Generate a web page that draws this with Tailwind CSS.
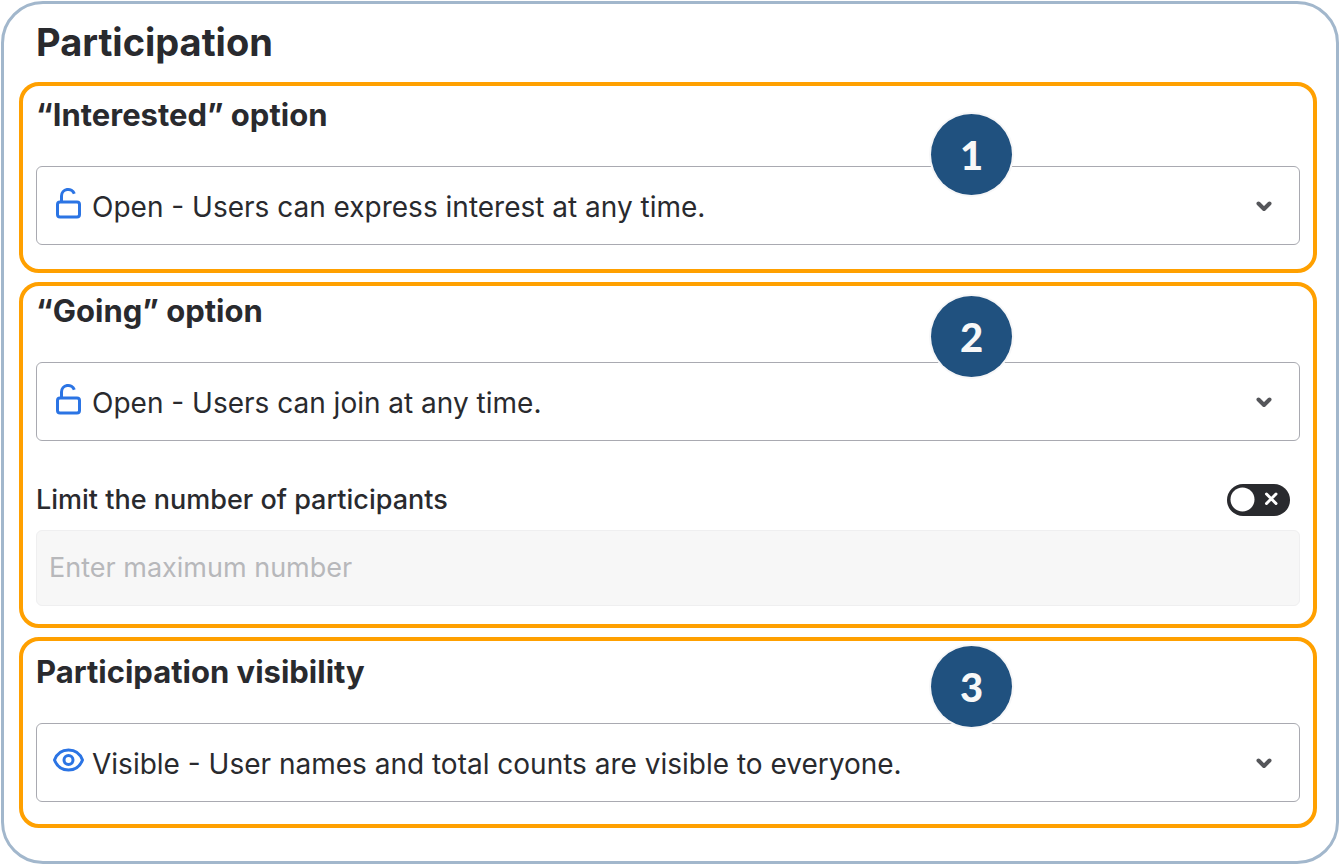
<!DOCTYPE html>
<html lang="en">
<head>
    <meta charset="UTF-8">
    <meta name="viewport" content="width=device-width, initial-scale=1.0">
    <title>Participation</title>
    <script src="https://cdn.jsdelivr.net/npm/@tailwindcss/browser@4"></script>
</head>
<body class="bg-white p-px font-['Inter',sans-serif] text-[#292a2e]">
    <main class="rounded-[42px] border-3 border-[#a2b7cc] pt-3 pr-[19px] pb-[33px] pl-[15px]">
        <h1 class="mb-[14px] px-[17px] text-[38px] leading-[52px] font-bold">Participation</h1>

        <div class="flex flex-col gap-[9px]">
            <!-- Interested -->
            <section class="relative rounded-[20px] border-4 border-[#ffa000] px-[13px] pt-[9px] pb-6">
                <h2 class="mb-[31px] text-[31px] leading-[40px] font-bold"><label for="interested">“Interested” option</label></h2>
                <div class="relative">
                    <select id="interested" class="block h-[79px] w-full appearance-none rounded-md border border-[#a9aab1] bg-white pt-[3px] pr-16 pl-[55px] text-[28px]">
                        <option>Open - Users can express interest at any time.</option>
                    </select>
                    <svg class="pointer-events-none absolute top-[21px] left-[19px] h-8 w-[27px]" viewBox="0 0 27 32" fill="none" stroke="#2b74e4" stroke-width="3" aria-hidden="true">
                        <rect x="2.5" y="15" width="22" height="15" rx="2.5" />
                        <path d="M6.500 15V9a6.600 6.600 0 0 1 12.800-2.200" />
                    </svg>
                    <svg class="pointer-events-none absolute top-[34px] right-[27px] h-3 w-[18px]" viewBox="0 0 18 12" fill="none" stroke="#55565a" stroke-width="4" stroke-linecap="round" stroke-linejoin="round" aria-hidden="true">
                        <path d="M3.500 3.500 9 9l5.500-5.500" />
                    </svg>
                </div>
                <span class="absolute top-[28px] right-[301px] flex size-[81px] items-center justify-center rounded-full bg-[#20517f] font-['Lato',sans-serif] text-[40px] font-black text-[#f8f8f8] ring-2 ring-[#f7f7f8]">1</span>
            </section>

            <!-- Going -->
            <section class="relative rounded-[20px] border-4 border-[#ffa000] px-[13px] pt-[5px] pb-[18px]">
                <h2 class="mb-[31px] text-[31px] leading-[40px] font-bold"><label for="going">“Going” option</label></h2>
                <div class="relative">
                    <select id="going" class="block h-[79px] w-full appearance-none rounded-md border border-[#a9aab1] bg-white pt-[3px] pr-16 pl-[55px] text-[28px]">
                        <option>Open - Users can join at any time.</option>
                    </select>
                    <svg class="pointer-events-none absolute top-[21px] left-[19px] h-8 w-[27px]" viewBox="0 0 27 32" fill="none" stroke="#2b74e4" stroke-width="3" aria-hidden="true">
                        <rect x="2.5" y="15" width="22" height="15" rx="2.5" />
                        <path d="M6.500 15V9a6.600 6.600 0 0 1 12.800-2.200" />
                    </svg>
                    <svg class="pointer-events-none absolute top-[34px] right-[27px] h-3 w-[18px]" viewBox="0 0 18 12" fill="none" stroke="#55565a" stroke-width="4" stroke-linecap="round" stroke-linejoin="round" aria-hidden="true">
                        <path d="M3.500 3.500 9 9l5.500-5.500" />
                    </svg>
                </div>

                <div class="mt-[39px] mb-[10px] flex h-10 items-center justify-between pr-[10px]">
                    <label for="limit" class="text-[27px] leading-[40px] font-medium">Limit the number of participants</label>
                    <span class="relative">
                        <input type="checkbox" id="limit" role="switch" class="block h-8 w-[63px] appearance-none rounded-full bg-[#292a2e]">
                        <svg class="pointer-events-none absolute inset-0 h-8 w-[63px]" viewBox="0 0 63 32" aria-hidden="true">
                            <circle cx="15.500" cy="15.500" r="12" fill="#fff" />
                            <path d="m39.500 10 9.500 9.500m0-9.500-9.500 9.500" stroke="#fff" stroke-width="3" stroke-linecap="round" />
                        </svg>
                    </span>
                </div>
                <input type="text" aria-label="Maximum number of participants" placeholder="Enter maximum number" disabled class="block h-[76px] w-full rounded-md border border-[#efeff0] bg-[#f7f7f7] px-3 pb-[2px] text-[27px] placeholder:text-[#b7b8bb]">
                <span class="absolute top-[10px] right-[301px] flex size-[81px] items-center justify-center rounded-full bg-[#20517f] font-['Lato',sans-serif] text-[40px] font-black text-[#f8f8f8] ring-2 ring-[#f7f7f8]">2</span>
            </section>

            <!-- Visibility -->
            <section class="relative rounded-[20px] border-4 border-[#ffa000] px-[13px] pt-[11px] pb-[22px]">
                <h2 class="mb-[31px] text-[31px] leading-[40px] font-bold"><label for="visibility">Participation visibility</label></h2>
                <div class="relative">
                    <select id="visibility" class="block h-[79px] w-full appearance-none rounded-md border border-[#a9aab1] bg-white pt-[3px] pr-16 pl-[55px] text-[28px]">
                        <option>Visible - User names and total counts are visible to everyone.</option>
                    </select>
                    <svg class="pointer-events-none absolute top-[24px] left-4 h-[26px] w-8" viewBox="0 0 32 26" fill="none" stroke="#2b74e4" stroke-width="3" aria-hidden="true">
                        <path d="M2.500 13C5 6.500 9.500 3 16.500 3s11.500 3.500 14 10c-2.500 6.500-7 10-14 10S5 19.500 2.500 13Z" stroke-linejoin="round" />
                        <circle cx="16.500" cy="13" r="4.500" />
                    </svg>
                    <svg class="pointer-events-none absolute top-[34px] right-[27px] h-3 w-[18px]" viewBox="0 0 18 12" fill="none" stroke="#55565a" stroke-width="4" stroke-linecap="round" stroke-linejoin="round" aria-hidden="true">
                        <path d="M3.500 3.500 9 9l5.500-5.500" />
                    </svg>
                </div>
                <span class="absolute top-[5px] right-[301px] flex size-[81px] items-center justify-center rounded-full bg-[#20517f] font-['Lato',sans-serif] text-[40px] font-black text-[#f8f8f8] ring-2 ring-[#f7f7f8]">3</span>
            </section>
        </div>
    </main>
</body>
</html>
